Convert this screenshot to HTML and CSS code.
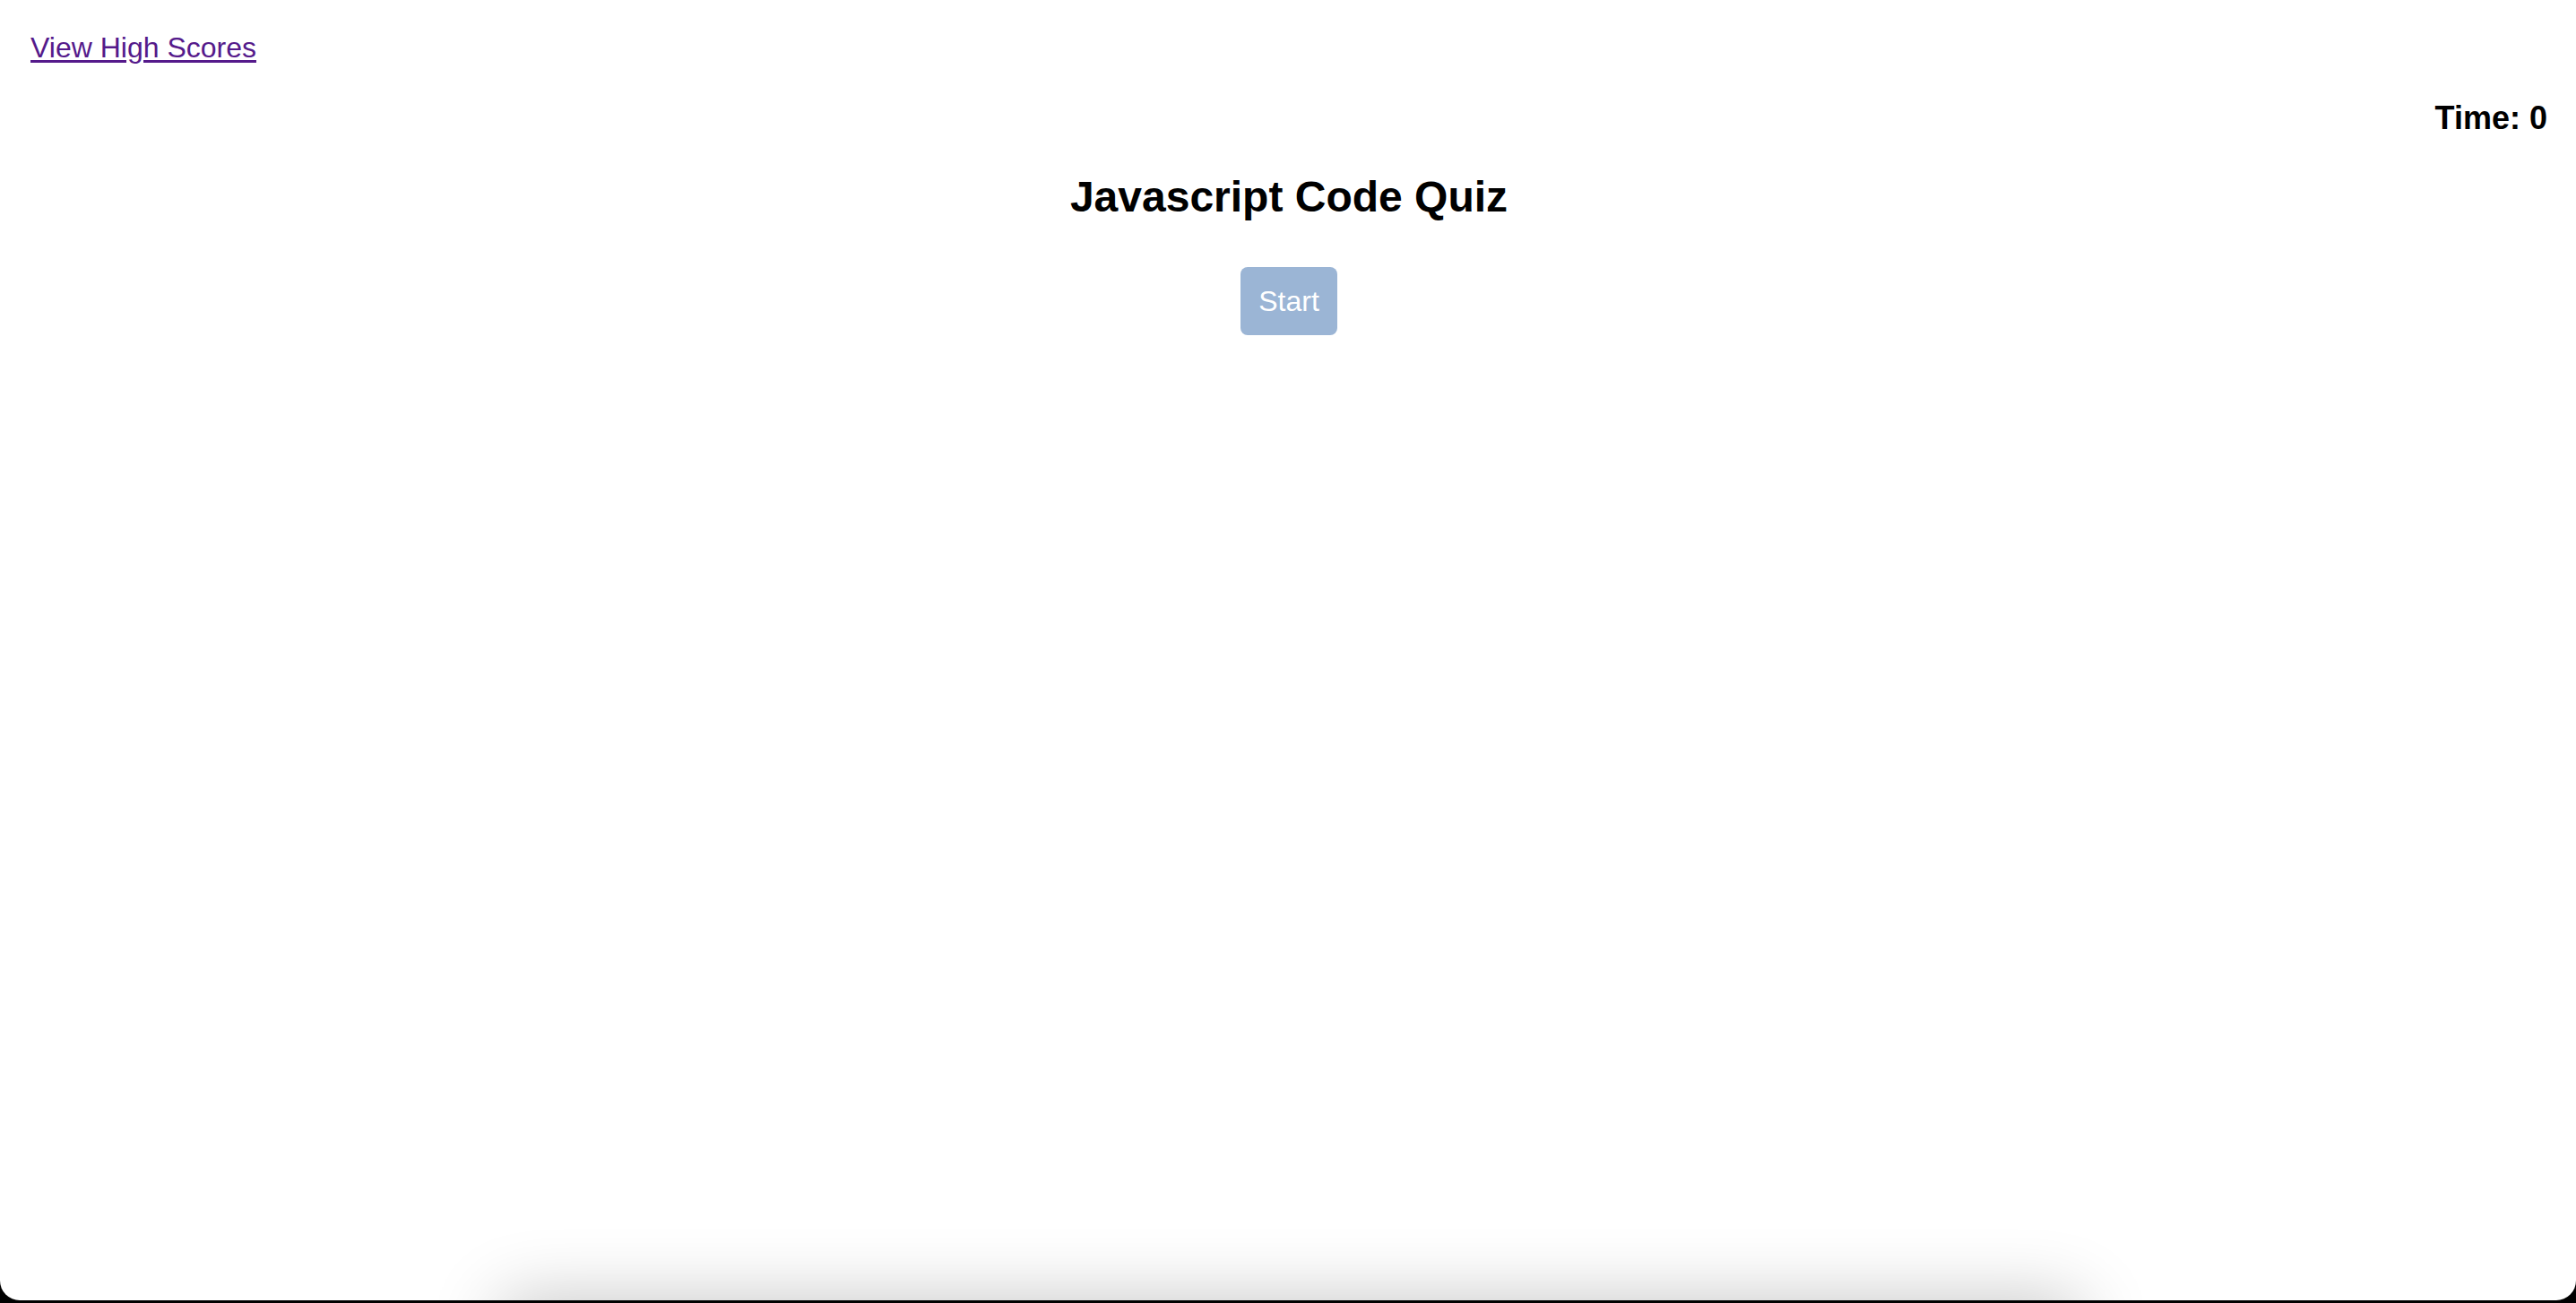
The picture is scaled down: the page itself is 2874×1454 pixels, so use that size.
FILE: index.html
```html
<!DOCTYPE html>
<html lang="en">
<head>
<meta charset="utf-8">
<title>Javascript Code Quiz</title>
<link rel="stylesheet" href="styles.css">
</head>
<body>
<div class="window">
  <header class="top">
    <a class="scores-link" href="#">View High Scores</a>
    <div class="timer">Time: 0</div>
  </header>
  <main class="quiz">
    <h1 class="title">Javascript Code Quiz</h1>
    <button class="start-btn" type="button">Start</button>
  </main>
  <div class="dock-shadow"></div>
</div>
</body>
</html>
```

FILE: styles.css
```css
html {
  background: #000;
}

body {
  margin: 0;
  font-family: "Liberation Sans", Arial, sans-serif;
  color: #000;
}

.window {
  position: relative;
  height: 1451px;
  box-sizing: border-box;
  padding: 35px 32px 0 34px;
  background: #fff;
  border-radius: 0 0 22px 22px;
  overflow: hidden;
}

.top {
  display: flex;
  flex-direction: column;
}

.scores-link {
  align-self: flex-start;
  font-size: 32px;
  line-height: 37px;
  color: #551a8b;
  text-decoration: underline;
  text-decoration-thickness: 3px;
  text-underline-offset: 3px;
}

.timer {
  margin-top: 39px;
  text-align: right;
  font-size: 36px;
  font-weight: bold;
  line-height: 41px;
}

.quiz {
  display: flex;
  flex-direction: column;
  align-items: center;
}

.title {
  margin: 40px 0 0;
  font-size: 48px;
  font-weight: bold;
  line-height: 55px;
}

.start-btn {
  margin-top: 51px;
  padding: 19.5px 20px;
  border: none;
  border-radius: 8px;
  background: #9bb5d5;
  color: #fff;
  font-family: "Liberation Sans", Arial, sans-serif;
  font-size: 32px;
  line-height: 37px;
}

.dock-shadow {
  position: absolute;
  left: 560px;
  right: 554px;
  top: 1451px;
  height: 100px;
  box-shadow: 0 0 80px rgba(0, 0, 0, 0.24);
}
```
